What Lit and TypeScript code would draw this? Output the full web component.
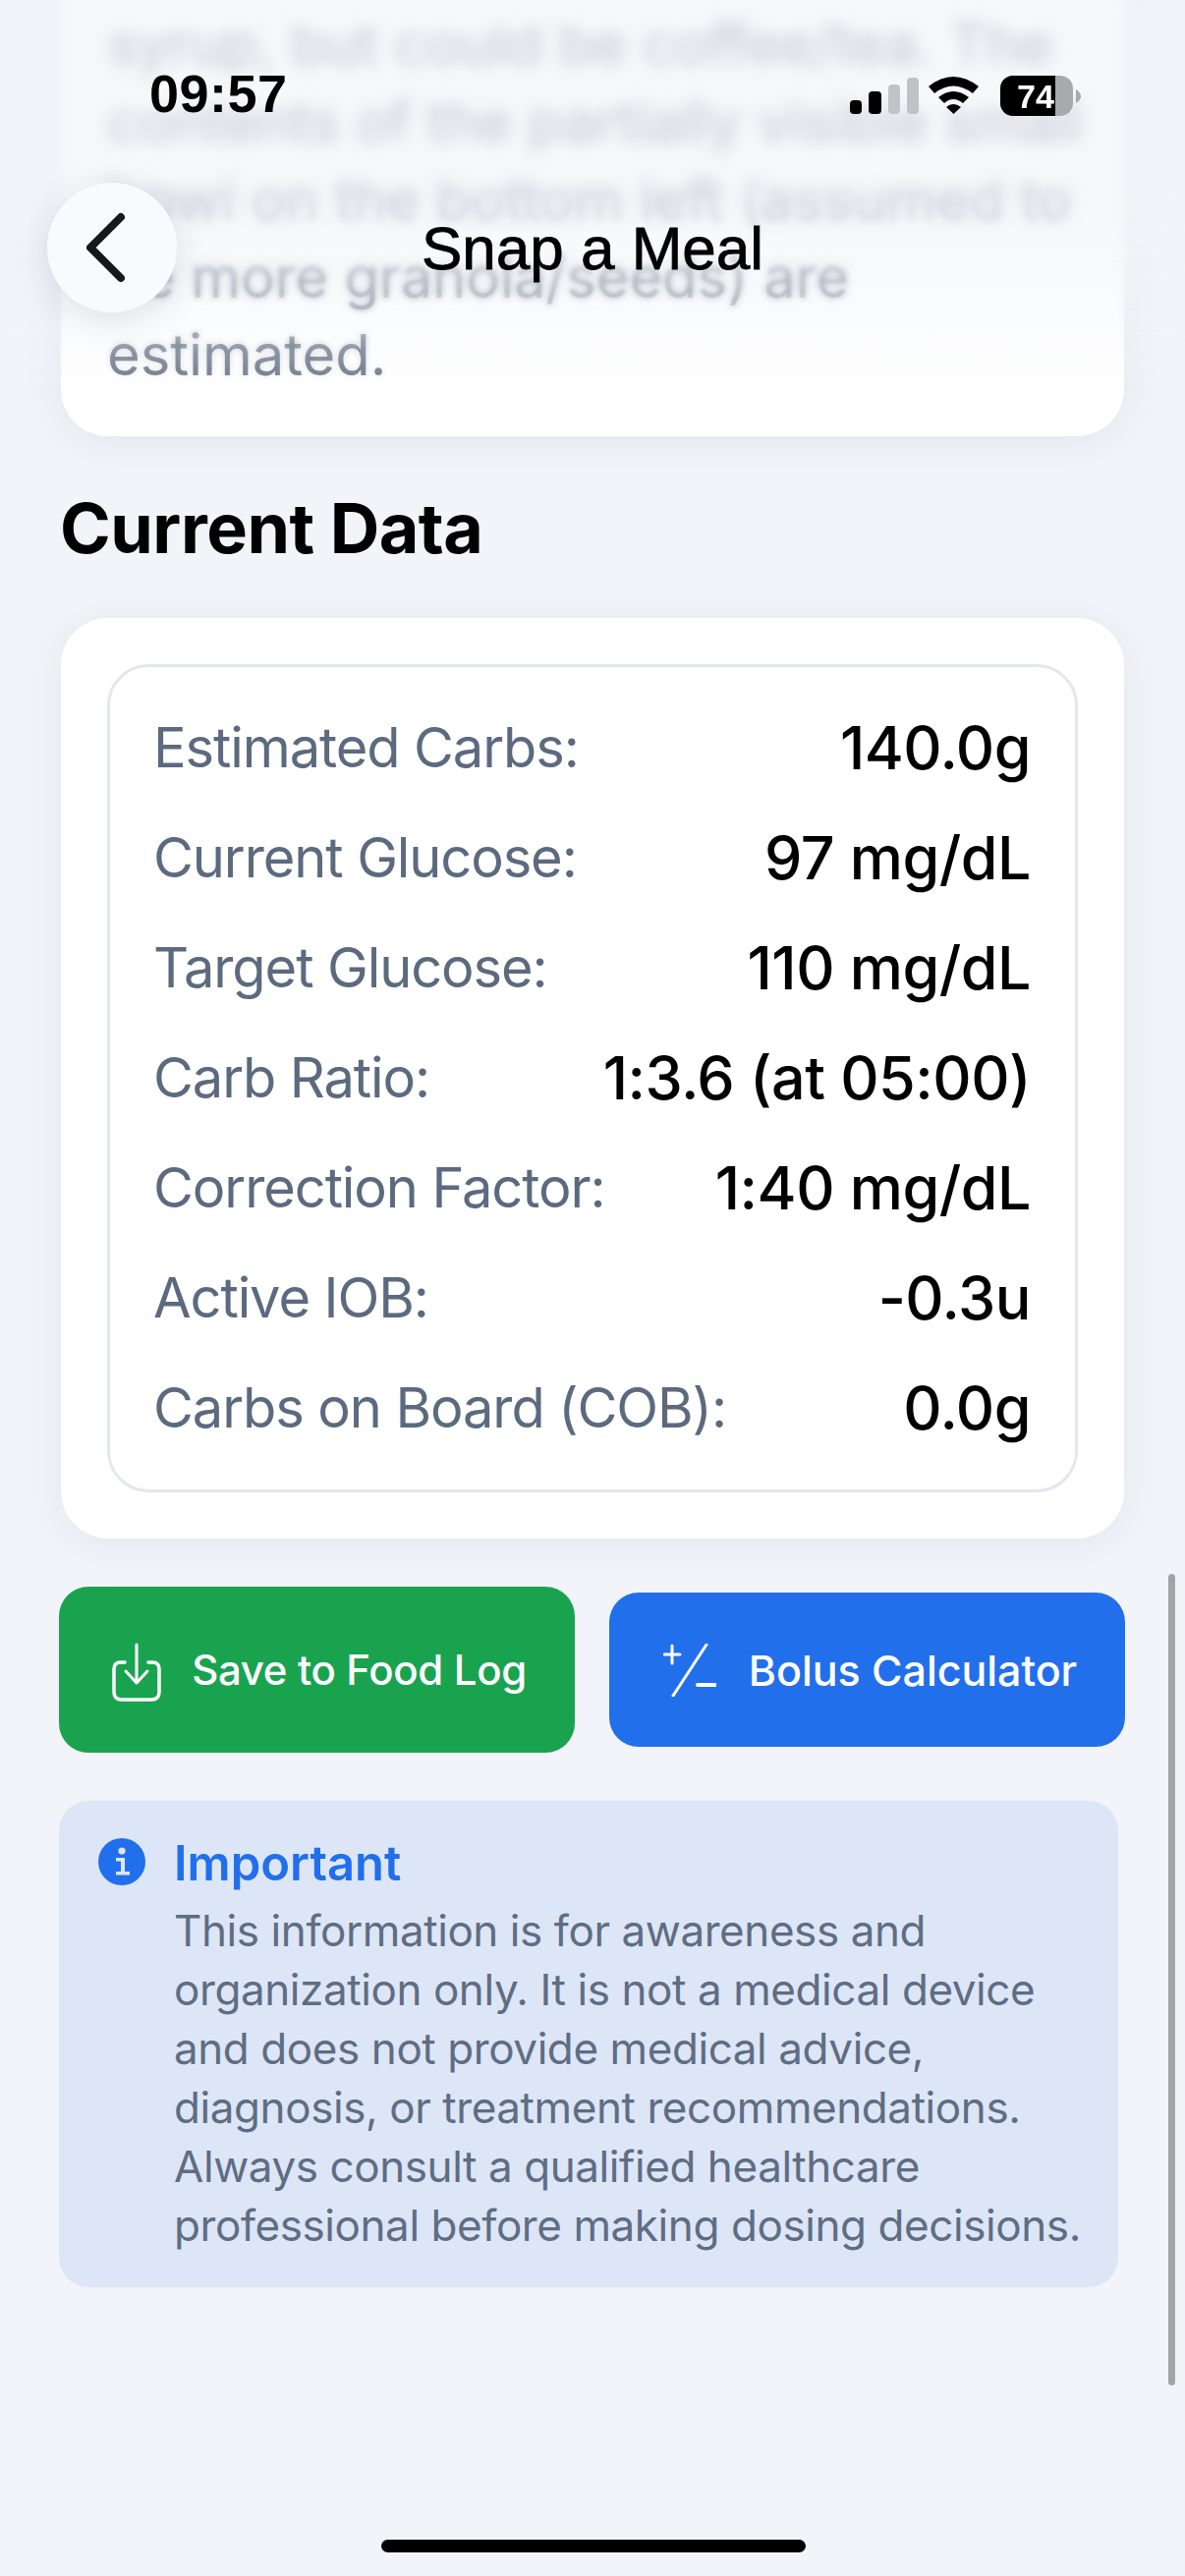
import { LitElement, html, css, svg } from "lit";
import { customElement } from "lit/decorators.js";

const rows: [string, string][] = [
  ["Estimated Carbs:", "140.0g"],
  ["Current Glucose:", "97 mg/dL"],
  ["Target Glucose:", "110 mg/dL"],
  ["Carb Ratio:", "1:3.6 (at 05:00)"],
  ["Correction Factor:", "1:40 mg/dL"],
  ["Active IOB:", "-0.3u"],
  ["Carbs on Board (COB):", "0.0g"],
];

const blurLines = [
  "syrup, but could be coffee/tea. The",
  "contents of the partially visible small",
  "bowl on the bottom left (assumed to",
  "be more granola/seeds) are",
  "estimated.",
];

@customElement("app-root")
export class AppRoot extends LitElement {
  static styles = css`
    :host {
      display: block;
      width: 1206px;
      height: 2622px;
      position: relative;
      overflow: hidden;
      background: #f2f4f9;
      font-family: Inter, "Noto Sans", sans-serif;
      color: #000;
    }
    .scroll {
      display: flex;
      flex-direction: column;
      padding: 0 62px;
      margin-top: -60px;
    }
    .card {
      background: #fff;
      border-radius: 48px;
      box-shadow: 0 6px 40px rgba(30, 41, 70, 0.07);
    }
    .note {
      padding: 66px 46px 43px 47px;
      font-size: 58px;
      line-height: 79px;
      letter-spacing: -0.1px;
      color: #5f6b7f;
      white-space: nowrap;
    }
    h2 {
      margin: 52px 0 0 -1px;
      font-size: 70px;
      line-height: 84px;
      font-weight: 700;
      letter-spacing: -0.5px;
    }
    .data {
      margin-top: 49px;
      padding: 47px 47px;
    }
    .inner {
      border: 3px solid #e3e7ef;
      border-radius: 42px;
      padding: 26px 45px 27px 44px;
      display: flex;
      flex-direction: column;
    }
    .row {
      height: 112px;
      display: flex;
      justify-content: space-between;
      align-items: center;
      white-space: nowrap;
    }
    .label { color: #5c6a7f; font-size: 56px; letter-spacing: -1.1px; }
    .value { font-weight: 500; color: #000; font-size: 61px; letter-spacing: -0.5px; }
    .buttons {
      display: flex;
      align-items: center;
      justify-content: space-between;
      margin: 49px -1px 0 -2px;
    }
    .btn {
      width: 525px;
      box-sizing: border-box;
      display: flex;
      align-items: center;
      justify-content: center;
      border-radius: 30px;
      color: #fff;
      font-weight: 500;
      white-space: nowrap;
    }
    .save {
      height: 169px;
      background: #1aa34f;
      gap: 31px;
      padding-left: 5px;
      font-size: 42px;
      letter-spacing: -0.35px;
    }
    .save svg { margin-top: 4px; }
    .bolus {
      height: 157px;
      background: #226fec;
      gap: 33px;
      padding-left: 6px;
      font-size: 43px;
      letter-spacing: -0.05px;
    }
    .info {
      margin: 49px 6px 0 -2px;
      background: #dde6f7;
      border-radius: 30px;
      padding: 39px 0 33px 40px;
      display: flex;
      gap: 29px;
    }
    .info svg { flex: none; margin-top: -1px; }
    .info-title {
      font-size: 49px;
      line-height: 50px;
      font-weight: 600;
      color: #226fec;
      margin-bottom: 13px;
    }
    .info-body {
      font-size: 44px;
      line-height: 60px;
      letter-spacing: -0.42px;
      color: #5f6d84;
      white-space: nowrap;
    }
    .blur {
      position: absolute;
      left: 0;
      right: 0;
      top: 0;
    }
    .b1 {
      height: 400px;
      backdrop-filter: blur(3px);
      -webkit-mask-image: linear-gradient(#000 68%, transparent);
      mask-image: linear-gradient(#000 68%, transparent);
    }
    .b2 {
      height: 320px;
      backdrop-filter: blur(8px);
      -webkit-mask-image: linear-gradient(#000 60%, transparent);
      mask-image: linear-gradient(#000 60%, transparent);
    }
    .tint {
      height: 420px;
      background: linear-gradient(rgba(242, 244, 249, 0.66) 0%, rgba(242, 244, 249, 0.66) 50%, rgba(242, 244, 249, 0) 100%);
    }
    .status {
      position: absolute;
      left: 152px;
      top: 70px;
      font-family: "Liberation Sans", Arial, sans-serif;
      font-size: 54px;
      line-height: 50px;
      font-weight: 700;
      letter-spacing: 0.5px;
    }
    .status-icons {
      position: absolute;
      left: 865px;
      top: 77px;
      display: block;
    }
    .back {
      position: absolute;
      left: 48px;
      top: 186px;
      width: 132px;
      height: 132px;
      border-radius: 50%;
      background: #f9fafe;
      box-shadow: 0 8px 36px rgba(30, 41, 70, 0.13);
      display: flex;
      align-items: center;
      justify-content: center;
    }
    .back svg { margin-left: -4px; }
    .title {
      position: absolute;
      left: 0;
      right: 0;
      top: 218px;
      text-align: center;
      font-family: "Liberation Sans", Arial, sans-serif;
      font-size: 62px;
      line-height: 70px;
      font-weight: 400;
      -webkit-text-stroke: 0.8px #000;
    }
    .scrollbar {
      position: absolute;
      left: 1189px;
      top: 1602px;
      width: 7px;
      height: 826px;
      border-radius: 4px;
      background: #a3a4a8;
    }
    .home {
      position: absolute;
      left: 388px;
      top: 2585px;
      width: 432px;
      height: 13px;
      border-radius: 7px;
      background: #000;
    }
  `;

  private statusIcons() {
    return svg`<svg class="status-icons" width="240" height="44" viewBox="0 0 240 44">
      <rect x="0" y="25" width="12" height="14" rx="4" fill="#000"/>
      <rect x="19" y="16" width="13" height="23" rx="4" fill="#000"/>
      <rect x="39" y="9" width="12" height="30" rx="4" fill="#c0c2c8"/>
      <rect x="58" y="2" width="12" height="37" rx="4" fill="#c0c2c8"/>
      <path d="M80 11 Q105 -9 131 11 L125 18 Q105 3 86 18Z" fill="#000"/>
      <path d="M90 22 Q105 10 121 22 L115 28 Q105 20 96 28Z" fill="#000"/>
      <path d="M98 32 Q105 26 113 32 L105.5 39Z" fill="#000"/>
      <rect x="153" y="0" width="74" height="41" rx="13" fill="#a9aaae"/>
      <path d="M166 0 H209 V41 H166 A13 13 0 0 1 153 28 V13 A13 13 0 0 1 166 0Z" fill="#000"/>
      <path d="M230 14 Q235 17 235 21 Q235 25 230 28Z" fill="#a9aaae"/>
      <text x="189" y="33" text-anchor="middle" font-family="Liberation Sans, Arial, sans-serif" font-weight="700" font-size="34" fill="#fff">74</text>
    </svg>`;
  }

  render() {
    return html`
      <div class="scroll">
        <div class="card note">
          ${blurLines.map((l) => html`<div>${l}</div>`)}
        </div>
        <h2>Current Data</h2>
        <div class="card data">
          <div class="inner">
            ${rows.map(
              ([a, b]) => html`<div class="row"><span class="label">${a}</span><span class="value">${b}</span></div>`
            )}
          </div>
        </div>
        <div class="buttons">
          <div class="btn save">
            <svg width="50" height="60" viewBox="0 0 50 60" fill="none" stroke="#fff" stroke-linecap="round" stroke-linejoin="round">
              <path d="M13 20 H9 Q2 20 2 27 V50 Q2 58 10 58 H40 Q48 58 48 50 V27 Q48 20 41 20 H37" stroke-width="3.5"/>
              <path d="M25 2 V40" stroke-width="3"/>
              <path d="M14 29 L25 41 L36 29" stroke-width="3"/>
            </svg>
            <span>Save to Food Log</span>
          </div>
          <div class="btn bolus">
            <svg width="54" height="54" viewBox="0 0 54 54" fill="none" stroke="#fff" stroke-linecap="round">
              <path d="M9 2 V20 M1 11 H17" stroke-width="3"/>
              <path d="M44 1 L10 53" stroke-width="3"/>
              <path d="M35 42 H53" stroke-width="4"/>
            </svg>
            <span>Bolus Calculator</span>
          </div>
        </div>
        <div class="info">
          <svg width="48" height="48" viewBox="0 0 48 48">
            <circle cx="24" cy="24" r="24" fill="#226fec"/>
            <circle cx="24" cy="13" r="3.6" fill="#dde6f7"/>
            <path d="M18 20 H27 V34 H32 V37.5 H18 V34 H23 V23.5 H18Z" fill="#dde6f7"/>
          </svg>
          <div>
            <div class="info-title">Important</div>
            <div class="info-body">
              This information is for awareness and<br />
              organization only. It is not a medical device<br />
              and does not provide medical advice,<br />
              diagnosis, or treatment recommendations.<br />
              Always consult a qualified healthcare<br />
              professional before making dosing decisions.
            </div>
          </div>
        </div>
      </div>
      <div class="blur b1"></div>
      <div class="blur b2"></div>
      <div class="blur tint"></div>
      <div class="status">09:57</div>
      ${this.statusIcons()}
      <div class="back">
        <svg width="48" height="72" viewBox="0 0 48 72" fill="none" stroke="#17181c" stroke-width="8" stroke-linecap="round" stroke-linejoin="round">
          <path d="M35 5 L4 36 L35 67"/>
        </svg>
      </div>
      <div class="title">Snap a Meal</div>
      <div class="scrollbar"></div>
      <div class="home"></div>
    `;
  }
}
